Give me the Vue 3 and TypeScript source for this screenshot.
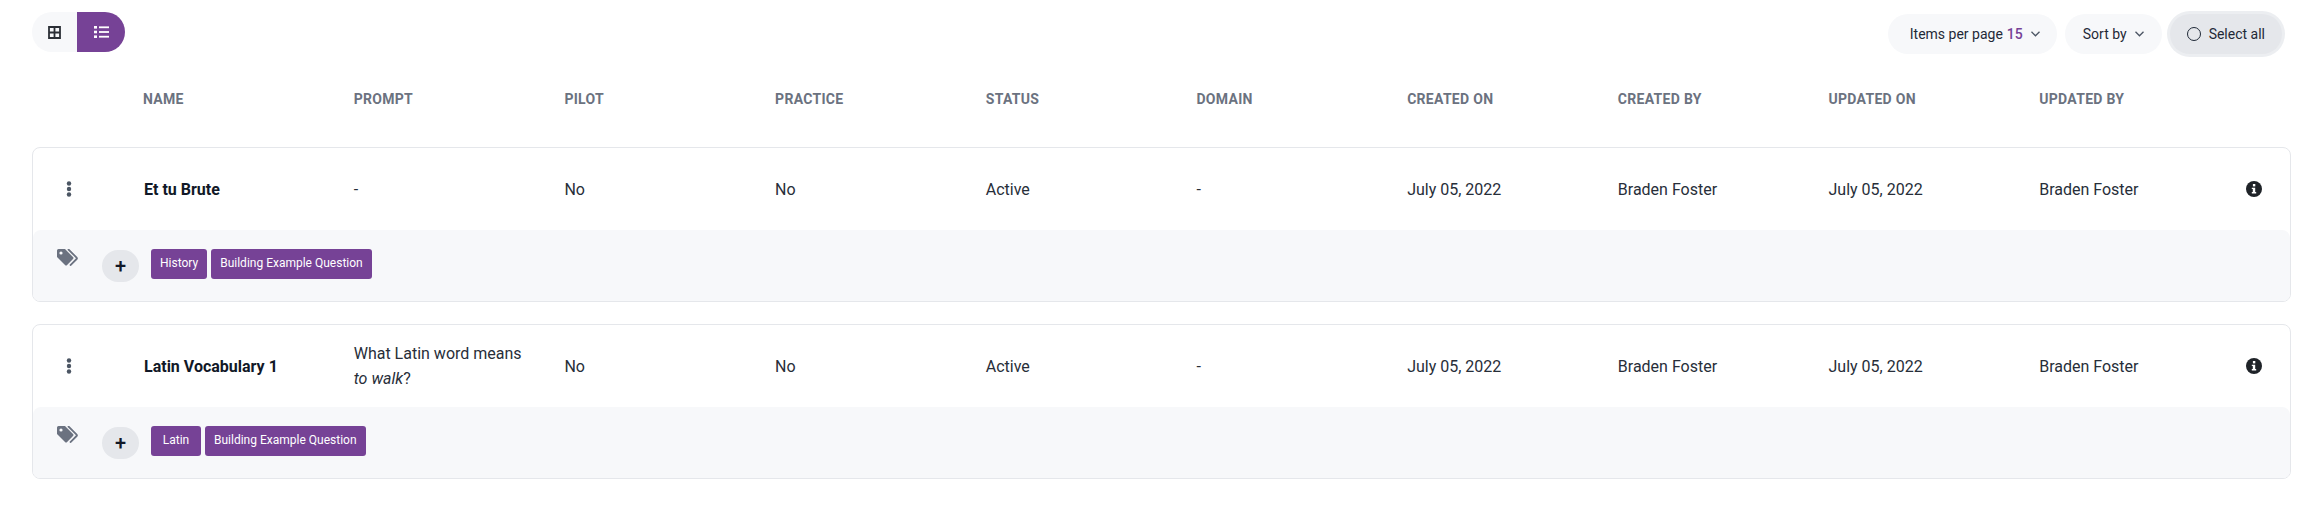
<script setup lang="ts">
interface Row {
  name: string
  prompt: string
  promptEm?: string
  tags: string[]
}

const columns = ['Name', 'Prompt', 'Pilot', 'Practice', 'Status', 'Domain', 'Created on', 'Created by', 'Updated on', 'Updated by']

const rows: Row[] = [
  { name: 'Et tu Brute', prompt: '-', tags: ['History', 'Building Example Question'] },
  { name: 'Latin Vocabulary 1', prompt: 'What Latin word means', promptEm: 'to walk', tags: ['Latin', 'Building Example Question'] }
]
</script>

<template>
  <div class="page">
    <div class="toolbar">
      <div class="view-toggle">
        <button class="toggle-btn">
          <svg width="13" height="13" viewBox="0 0 13 13">
            <path d="M1 1h11v11H1zM6.5 1v11M1 6.5h11" fill="none" stroke="#2b2f36" stroke-width="1.8" />
          </svg>
        </button>
        <button class="toggle-btn active">
          <svg width="15" height="12" viewBox="0 0 15 12" fill="#fff">
            <rect x="0" y="0" width="3" height="2.6" />
            <rect x="0" y="4.7" width="3" height="2.6" />
            <rect x="0" y="9.4" width="3" height="2.6" />
            <rect x="5" y="0.4" width="10" height="1.8" />
            <rect x="5" y="5.1" width="10" height="1.8" />
            <rect x="5" y="9.8" width="10" height="1.8" />
          </svg>
        </button>
      </div>
      <div class="actions">
        <button class="pill per-page">
          Items per page <b class="count">15</b>
          <svg class="chev" width="9" height="6" viewBox="0 0 9 6"><path d="M.5 .8l4 4 4-4" fill="none" stroke="#4b5563" stroke-width="1.3" /></svg>
        </button>
        <button class="pill sort">
          Sort by
          <svg class="chev" width="9" height="6" viewBox="0 0 9 6"><path d="M.5 .8l4 4 4-4" fill="none" stroke="#4b5563" stroke-width="1.3" /></svg>
        </button>
        <button class="pill select-all">
          <span class="radio"></span>
          Select all
        </button>
      </div>
    </div>

    <div class="grid head">
      <span></span>
      <span v-for="col in columns" :key="col">{{ col }}</span>
    </div>

    <div v-for="row in rows" :key="row.name" class="card">
      <div class="grid body">
        <span class="dots">
          <svg width="6" height="16" viewBox="0 0 6 16" fill="#4b5563">
            <circle cx="3" cy="2.5" r="2.2" />
            <circle cx="3" cy="8" r="2.2" />
            <circle cx="3" cy="13.5" r="2.2" />
          </svg>
        </span>
        <span class="name">{{ row.name }}</span>
        <span class="prompt">{{ row.prompt }}<template v-if="row.promptEm"><br /><em>{{ row.promptEm }}</em>?</template></span>
        <span>No</span>
        <span>No</span>
        <span>Active</span>
        <span>-</span>
        <span>July 05, 2022</span>
        <span>Braden Foster</span>
        <span>July 05, 2022</span>
        <span>Braden Foster</span>
        <svg class="info" width="16" height="16" viewBox="0 0 16 16">
          <circle cx="8" cy="8" r="8" fill="#1f2328" />
          <rect x="6.9" y="3" width="2.4" height="2.4" fill="#fff" />
          <path d="M5.8 6.7h3.4v4.4h1v1.4H5.8v-1.4h1V8.1h-1z" fill="#fff" />
        </svg>
      </div>
      <div class="footer">
        <svg class="tag-icon" width="21" height="17" viewBox="0 0 21 17">
          <path d="M0 1.5A1.5 1.5 0 0 1 1.5 0H8l8 8a1.5 1.5 0 0 1 0 2.1l-5.9 5.9a1.5 1.5 0 0 1-2.1 0L0 8z" fill="#6b7280" />
          <circle cx="4" cy="4" r="1.6" fill="#f8f9fb" />
          <path d="M11 0l8.6 8.6a1 1 0 0 1 0 1.4L13 16.6" fill="none" stroke="#6b7280" stroke-width="1.8" />
        </svg>
        <button class="add">+</button>
        <div class="tags">
          <span v-for="tag in row.tags" :key="tag" class="tag">{{ tag }}</span>
        </div>
      </div>
    </div>
  </div>
</template>

<style scoped>
.page {
  width: 2315px;
  height: 516px;
  box-sizing: border-box;
  padding: 12px 24px 0 32px;
  font-family: Roboto, "Liberation Sans", sans-serif;
  color: #1f2937;
  background: #fff;
  overflow: hidden;
}

button {
  border: none;
  font-family: inherit;
  color: inherit;
  cursor: pointer;
  padding: 0;
}

.toolbar {
  display: flex;
  justify-content: space-between;
  align-items: flex-start;
  height: 40px;
}

.view-toggle {
  display: flex;
  height: 40px;
}

.toggle-btn {
  width: 45px;
  background: #f7f8fa;
  border-radius: 20px 0 0 20px;
  display: flex;
  align-items: center;
  justify-content: center;
}

.toggle-btn.active {
  width: 48px;
  background: #764296;
  border-radius: 0 20px 20px 0;
}

.actions {
  display: flex;
  gap: 8px;
  margin-top: 2px;
  margin-right: 9px;
}

.pill {
  height: 40px;
  border-radius: 20px;
  background: #f7f8fa;
  font-size: 14px;
  color: #1f2937;
  display: flex;
  align-items: center;
  white-space: nowrap;
}

.per-page {
  padding: 0 17px 0 22px;
}

.count {
  font-weight: 500;
  color: #764296;
  margin-left: 4px;
}

.chev {
  margin-left: 8px;
}

.sort {
  padding: 0 18px;
}

.select-all {
  padding: 0 17px;
  background: #e5e7eb;
  box-shadow: 0 0 0 3px #eceef1;
}

.radio {
  width: 14px;
  height: 14px;
  box-sizing: border-box;
  border: 1.5px solid #1f2937;
  border-radius: 50%;
  margin-right: 8px;
}

.grid {
  display: grid;
  grid-template-columns: 110px repeat(10, 210.7px) 1fr;
  align-items: center;
}

.head {
  margin-top: 38px;
  font-size: 14px;
  font-weight: 700;
  letter-spacing: 0.3px;
  color: #6b7280;
  text-transform: uppercase;
  height: 18px;
  padding-left: 1px;
}

.card {
  margin-top: 39px;
  border: 1px solid #e5e7eb;
  border-radius: 8px;
  height: 155px;
  box-sizing: border-box;
  overflow: hidden;
}

.card + .card {
  margin-top: 22px;
}

.body {
  height: 82px;
  font-size: 16px;
  font-weight: 400;
  color: #272e39;
}

.dots {
  display: flex;
  padding-left: 33px;
}

.name {
  font-weight: 700;
  color: #111827;
  padding-left: 1px;
}

.prompt {
  line-height: 25px;
}

.info {
  justify-self: start;
  margin-left: -4px;
}

.footer {
  display: flex;
  align-items: flex-start;
  height: 72px;
  background: #f7f8fa;
  border-radius: 8px 8px 0 0;
  padding-left: 24px;
}

.tag-icon {
  margin-top: 19px;
}

.add {
  width: 37px;
  height: 32px;
  border-radius: 16px;
  background: #e5e7eb;
  font-size: 20px;
  font-weight: 500;
  color: #111827;
  margin: 20px 0 0 24px;
  line-height: 32px;
}

.tags {
  display: flex;
  gap: 4px;
  margin: 19px 0 0 12px;
}

.tag {
  height: 30px;
  min-width: 50px;
  box-sizing: border-box;
  line-height: 29px;
  padding: 0 9px;
  border-radius: 3px;
  background: #764296;
  color: #fff;
  font-size: 12px;
  font-weight: 400;
  text-align: center;
}
</style>

<style>
body {
  margin: 0;
  background: #fff;
}
</style>
